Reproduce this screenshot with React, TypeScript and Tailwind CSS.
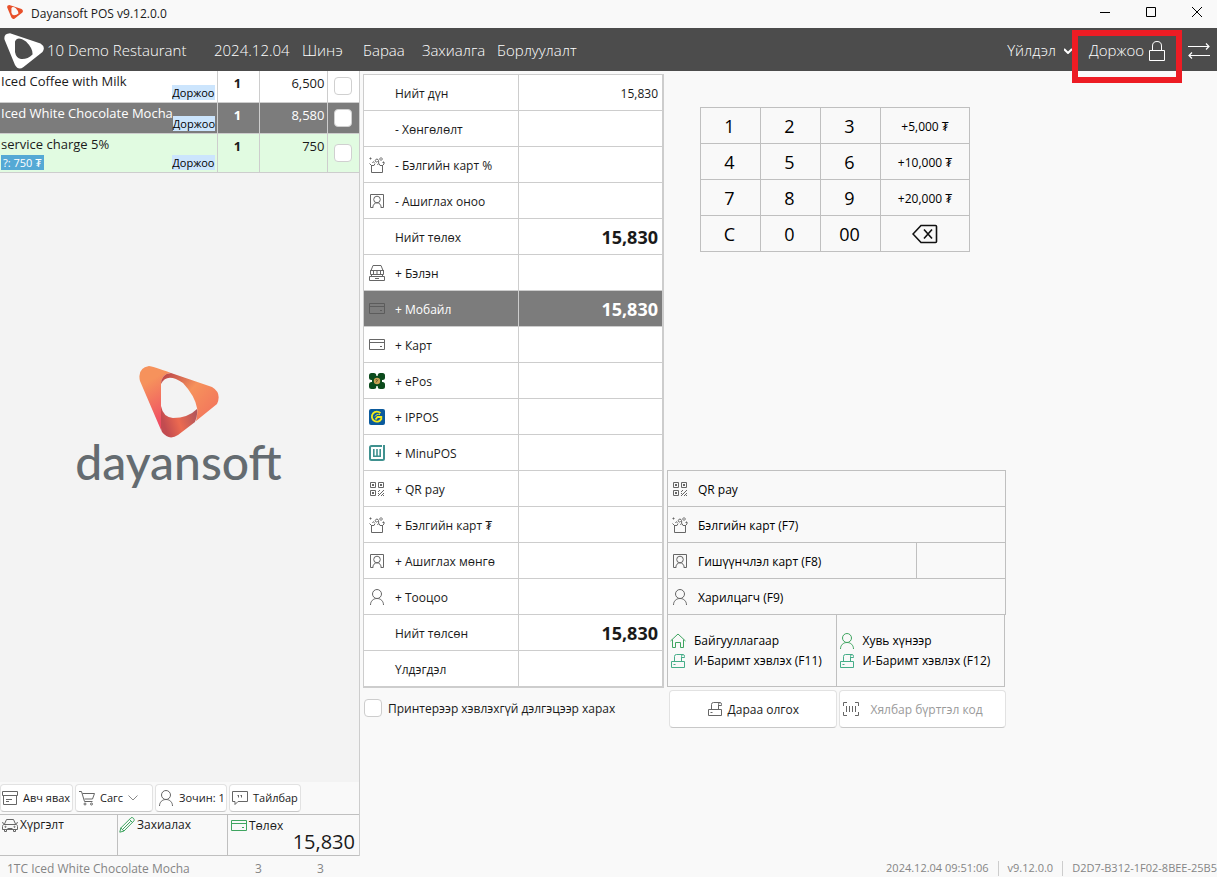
import type { ReactNode } from "react";

type IconProps = { className?: string };

function Icon({ className = "text-[#666]", children }: IconProps & { children: ReactNode }) {
  return (
    <svg viewBox="0 0 16 16" fill="none" stroke="currentColor" className={`size-4 shrink-0 ${className}`} aria-hidden="true">
      {children}
    </svg>
  );
}

const GiftIcon = () => (
  <Icon>
    <path d="M2.5 8v7.500h11V8M2.500 8.500H5l1-2M13.500 8.500H11l-1-2M2.500 8.500L.5 6.500M13.500 8.500l2-2" />
    <path d="M8.500 8c1.500-1.500 1.500-4.500.5-5.500-1.500-1.200-3.500.5-2.500 2 .8 1 2 .5 2-.5M3.500 6c.5-1.500 1.500-1.500 2-.5" />
    <path d="M12 .5l1.500 1.500L12 3.500 10.500 2zM1.500 .5v2M.5 1.500h2M14.500 4.500v2M13.500 5.500h2" />
  </Icon>
);

const MemberIcon = () => (
  <Icon>
    <path d="M4 14.500H1.500v-13h13v13H12" />
    <circle cx="8" cy="6.500" r="3.300" />
    <path d="M3.800 15c0-3.200 1.700-5.200 4.200-5.200s4.200 2 4.200 5.200" />
  </Icon>
);

const PersonIcon = ({ className }: IconProps) => (
  <Icon className={className}>
    <circle cx="8" cy="5" r="4.500" />
    <path d="M1.500 16c0-3.800 2.700-6.500 6.500-6.500s6.500 2.700 6.500 6.500" />
  </Icon>
);

const RegisterIcon = () => (
  <Icon>
    <path d="M2 5.500L4 .5h8l2 5M1 5.500h14M1.500 5.500v4h13v-4M4.500 5.500v4M8 5.500v4M11.500 5.500v4M2.500 9.500v2M13.500 9.500v2" />
    <path d="M.5 11.500h15v4H.5zM6 13.500h4" />
  </Icon>
);

const CardIcon = ({ className }: IconProps) => (
  <Icon className={className}>
    <path d="M.5 2.500h15v10H.5zM.5 5.500h15M11 9.500h2" />
  </Icon>
);

const QrIcon = () => (
  <Icon>
    <path d="M1.500 1.500h5v5h-5zM9.500 1.500h5v5h-5zM1.500 9.500h5v5h-5z" />
    <path d="M3 4h2M11 4h2M3 12h2" strokeWidth="2" />
    <path d="M9 11l2-2M9 15l6-6M12 15l3-3M9 13l1-1M14 15l1-1" />
  </Icon>
);

const EposIcon = () => (
  <Icon>
    <g fill="#0b4a1c" stroke="none">
      <rect x="0" y="0" width="7.300" height="7" rx="2.500" />
      <rect x="8.700" y="0" width="7.300" height="7" rx="2.500" />
      <rect x="0" y="9" width="7.300" height="7" rx="2.500" />
      <rect x="8.700" y="9" width="7.300" height="7" rx="2.500" />
      <rect x="3" y="3" width="10" height="10" />
    </g>
    <circle cx="8" cy="8" r="3.200" fill="#c9a355" stroke="none" />
    <path d="M7 9.500l2-3M6.500 7l1.500-.5" stroke="#6b5a2a" />
  </Icon>
);

const IpposIcon = () => (
  <Icon>
    <rect width="16" height="16" rx="2" fill="#0b5a9c" stroke="none" />
    <path d="M11.500 4.200A5 5 0 1 0 12.300 10V8H8.500L6.500 10.500" stroke="#f2ea1c" strokeWidth="1.800" />
    <path d="M6 7.500C7 5.500 9 5 11 5.500" stroke="#f2ea1c" />
  </Icon>
);

const MinuIcon = () => (
  <Icon>
    <path d="M13 1H2.500Q1 1 1 2.500v11Q1 15 2.500 15h11q1.500 0 1.500-1.500V0" stroke="#3f918f" strokeWidth="2" />
    <path d="M4.800 4v7.200h6.400V4M8 4v7" stroke="#3f918f" strokeWidth="1.600" />
  </Icon>
);

const ReceiptIcon = ({ className }: IconProps) => (
  <Icon className={className}>
    <path d="M1.500 8.500h13v6h-13zM4.500 8.500v-5q0-2 2-2h6.500M11.500 8.500v-5q0-2 1.500-2t1.500 2v1h-3M3.500 11.500h2" />
  </Icon>
);

const HomeIcon = ({ className }: IconProps) => (
  <Icon className={className}>
    <path d="M.5 8L8 1l7.500 7M2.500 6.500v8h3v-5h5v5h3v-8" />
  </Icon>
);

const ScanIcon = () => (
  <Icon>
    <path d="M4 1.500H.5V5M12 1.500h3.500V5M4 14.500H.5V11M12 14.500h3.500V11M3.500 5v6M6.500 5v6M9.500 5v6M12.500 5v6" />
  </Icon>
);

const BoxIcon = () => (
  <Icon>
    <path d="M.5 1.500h15v4H.5zM1.500 5.500v9h13v-9M4 9.500h6M4 11.500h3" />
  </Icon>
);

const CartIcon = () => (
  <Icon>
    <path d="M0 1.500h2.500l3 10h8M3.500 3.500h12l-2 5.500h-8" />
    <circle cx="6" cy="14" r="1" />
    <circle cx="12.500" cy="14" r="1" />
  </Icon>
);

const CommentIcon = () => (
  <Icon>
    <path d="M.5 1.500h15v10H6l-3 3v-3H.5zM6.500 5v2.500M9.500 5v2.500M5.500 5.500h1M8.500 5.500h1" />
  </Icon>
);

const CarIcon = () => (
  <Icon>
    <path d="M2.500 7l2-4.500h7l2 4.500M1.500 7.500h13q1 1 1 2v3H.5v-3q0-1 1-2zM2.500 12.500v2h2v-2M11.500 12.500v2h2v-2M5.500 11.500h5M0 5.500l2 1M16 5.500l-2 1" />
    <circle cx="3.500" cy="9.800" r=".6" />
    <circle cx="12.500" cy="9.800" r=".6" />
  </Icon>
);

const PencilIcon = () => (
  <Icon className="text-[#3fa560]">
    <path d="M.8 15.200l1-4.200L12 .8q1.200-.8 2.400.4t.6 2.600L5 14zM1.800 11L5 14M10.500 2.500l3 3M3.500 12.500l8-8" />
  </Icon>
);

function BrandMark({ className }: IconProps) {
  return (
    <svg viewBox="0 0 80 72" className={className} aria-hidden="true">
      <path
        fillRule="evenodd"
        fill="currentColor"
        d="M12 .5L73 21Q84 28 77 38L39 68Q29 76 22 64L1 13Q-1 1 12 .5zM22 17V38Q24 50 34 52Q47 53 57 43Q58 31 44 17Q27 5 22 17z"
      />
    </svg>
  );
}

function ColorMark({ className }: IconProps) {
  return (
    <svg viewBox="0 0 80 72" className={className} aria-hidden="true">
      <defs>
        <linearGradient id="left" x1="0" y1="0" x2=".3" y2="1">
          <stop offset=".3" stopColor="#f6925c" />
          <stop offset="1" stopColor="#ef4d63" />
        </linearGradient>
        <linearGradient id="right" x1="0" y1="0" x2=".9" y2=".7">
          <stop offset="0" stopColor="#b63f48" />
          <stop offset=".55" stopColor="#f6925c" />
          <stop offset="1" stopColor="#f37a5c" />
        </linearGradient>
        <linearGradient id="bottom" x1="0" y1=".3" x2="1" y2="0">
          <stop offset="0" stopColor="#c24b50" />
          <stop offset=".4" stopColor="#ec6a50" />
          <stop offset="1" stopColor="#a8525c" />
        </linearGradient>
      </defs>
      <path fill="url(#left)" d="M10 0Q13 0 32 7Q22 8 22 18V64L1 15Q-2 2 10 0z" />
      <path fill="url(#right)" d="M32 7L73 21Q83 27 78 38L57 55Q59 46 58 42Q56 30 44 17Q28 6 22 18Q22 8 32 7z" />
      <path fill="url(#bottom)" d="M22 40Q24 51 34 52Q49 52 58 43Q59 49 56 56L39 69Q30 75 23 66Q22 64 22 62z" />
    </svg>
  );
}

const orders = [
  { name: "Iced Coffee with Milk", qty: 1, price: "6,500", row: "h-[31px] bg-white" },
  { name: "Iced White Chocolate Mocha", qty: 1, price: "8,580", row: "h-[31px] bg-[#7c7c7c] text-white" },
  { name: "service charge 5%", qty: 1, price: "750", row: "h-[39px] bg-[#e1fbe1]", tag: "?: 750 ₮" },
];

const payments: { icon?: ReactNode; label: string; amount?: string; bold?: boolean; active?: boolean }[] = [
  { label: "Нийт дүн", amount: "15,830" },
  { label: "- Хөнгөлөлт" },
  { icon: <GiftIcon />, label: "- Бэлгийн карт %" },
  { icon: <MemberIcon />, label: "- Ашиглах оноо" },
  { label: "Нийт төлөх", amount: "15,830", bold: true },
  { icon: <RegisterIcon />, label: "+ Бэлэн" },
  { icon: <CardIcon className="text-[#5c5c5c]" />, label: "+ Мобайл", amount: "15,830", bold: true, active: true },
  { icon: <CardIcon />, label: "+ Карт" },
  { icon: <EposIcon />, label: "+ ePos" },
  { icon: <IpposIcon />, label: "+ IPPOS" },
  { icon: <MinuIcon />, label: "+ MinuPOS" },
  { icon: <QrIcon />, label: "+ QR pay" },
  { icon: <GiftIcon />, label: "+ Бэлгийн карт ₮" },
  { icon: <MemberIcon />, label: "+ Ашиглах мөнгө" },
  { icon: <PersonIcon />, label: "+ Тооцоо" },
  { label: "Нийт төлсөн", amount: "15,830", bold: true },
  { label: "Үлдэгдэл" },
];

const keys = ["1", "2", "3", "+5,000 ₮", "4", "5", "6", "+10,000 ₮", "7", "8", "9", "+20,000 ₮", "C", "0", "00"];

function TitleBar() {
  return (
    <div className="flex h-7 items-center bg-[#f9f9f9] pl-[7px]">
      <BrandMark className="mb-1 h-4 w-4 text-[#e8502a]" />
      <span className="ml-2 text-xs">Dayansoft POS v9.12.0.0</span>
      <div className="ml-auto flex gap-9 pr-[15px] pb-1">
        <button aria-label="Minimize">
          <svg viewBox="0 0 10 10" className="size-[10px]" stroke="#000"><path d="M0 5.500h10" /></svg>
        </button>
        <button aria-label="Maximize">
          <svg viewBox="0 0 10 10" className="size-[10px]" stroke="#000" fill="none"><path d="M.5 .5h9v9h-9z" /></svg>
        </button>
        <button aria-label="Close">
          <svg viewBox="0 0 10 10" className="size-[10px]" stroke="#000"><path d="M0 0l10 10M10 0L0 10" /></svg>
        </button>
      </div>
    </div>
  );
}

function Header() {
  return (
    <header className="flex h-[43px] items-center bg-[#4c4c4c] pt-[2px] pl-1 text-[15px] font-light text-white">
      <BrandMark className="h-9 w-10" />
      <span className="ml-[3px] w-[167px] whitespace-nowrap">10 Demo Restaurant</span>
      <span className="w-[88px] whitespace-nowrap">2024.12.04</span>
      <nav className="flex gap-[19px]">
        <button className="w-[42px] text-left">Шинэ</button>
        <button className="w-10 text-left">Бараа</button>
        <button className="w-14 text-left">Захиалга</button>
        <button>Борлуулалт</button>
      </nav>
      <div className="ml-auto flex h-full items-center">
        <button className="flex items-center gap-2 whitespace-nowrap">
          Үйлдэл
          <svg viewBox="0 0 8 6" className="h-[6px] w-2" fill="none" stroke="currentColor" strokeWidth="2"><path d="M0 1l4 4 4-4" /></svg>
        </button>
        <div className="relative flex h-full w-[110px] items-center justify-center">
          <button className="flex items-center gap-[5px] whitespace-nowrap">
            Доржоо
            <svg viewBox="0 0 16 20" className="h-5 w-4" fill="none" stroke="currentColor"><path d="M.5 9.500h15v10H.5zM3.500 9.500V5q0-4.500 4.500-4.500T12.500 5v4.500" /></svg>
          </button>
          <div className="pointer-events-none absolute inset-x-0 top-0 z-10 h-[53px] border-[6px] border-[#ed1c24]" />
        </div>
        <button aria-label="Switch user" className="pr-[7px] pl-[6px]">
          <svg viewBox="0 0 22 16" className="h-4 w-[22px]" fill="none" stroke="currentColor" strokeWidth="1.200"><path d="M0 3.500h21M18 .5l3 3-3 3M22 12.500H1M4 9.500l-3 3 3 3" /></svg>
        </button>
      </div>
    </header>
  );
}

function OrderPanel() {
  const action = "flex h-7 items-center gap-[5px] whitespace-nowrap rounded border border-[#e2e2e2] border-b-[#c8c8c8] bg-white";
  return (
    <aside className="flex w-[360px] shrink-0 flex-col border-r border-[#cdcdcd]">
      <table className="w-full table-fixed">
        <colgroup>
          <col />
          <col className="w-[42px]" />
          <col className="w-[68px]" />
          <col className="w-8" />
        </colgroup>
        <tbody>
          {orders.map((order) => (
            <tr key={order.name} className={`border-b border-[#cdcdcd] text-[13px] ${order.row}`}>
              <td className="h-[inherit] border-r border-[#cdcdcd] p-0 align-top">
                <div className="flex h-full justify-between pl-px">
                  <div className="flex flex-col items-start justify-between whitespace-nowrap">
                    <span className="leading-5">{order.name}</span>
                    {order.tag && <span className="mb-[2px] bg-[#55a9d5] px-[2px] text-[11px] leading-[15px] text-white">{order.tag}</span>}
                  </div>
                  <span className="mr-[2px] mb-[2px] self-end bg-[#cce5fd] text-[11px] leading-[15px] text-black">Доржоо</span>
                </div>
              </td>
              <td className="border-r border-[#cdcdcd] p-0 pr-px text-center align-top leading-6 font-bold">{order.qty}</td>
              <td className="border-r border-[#cdcdcd] p-0 pr-[2px] text-right align-top leading-6">{order.price}</td>
              <td className="p-0 text-center align-middle">
                <input
                  type="checkbox"
                  aria-label={order.name}
                  className="mx-auto block size-[18px] appearance-none rounded border border-[#d0d0d0] bg-white"
                />
              </td>
            </tr>
          ))}
        </tbody>
      </table>

      <div className="flex flex-1 flex-col items-center justify-center bg-[#f3f3f3] pr-[2px] pb-[102px]">
        <ColorMark className="h-[72px] w-20" />
        <span className="font-['Lato',sans-serif] text-5xl font-medium text-[#646b70]">dayansoft</span>
      </div>

      <div className="flex gap-[2px] py-[2px] text-[11px]">
        <button className={`${action} w-[73px] pl-px`}><BoxIcon />Авч явах</button>
        <button className={`${action} w-[78px] pl-[3px]`}>
          <CartIcon />Сагс
          <svg viewBox="0 0 10 6" className="h-[6px] w-[10px]" fill="none" stroke="#888"><path d="M.5 .5L5 5 9.500 .5" /></svg>
        </button>
        <button className={`${action} w-[72px] pl-[2px]`}><PersonIcon />Зочин: 1</button>
        <button className={`${action} w-[72px] pl-[2px]`}><CommentIcon />Тайлбар</button>
      </div>
      <div className="flex h-[42px] border-y border-[#c0c0c0] text-xs">
        <button className="flex w-[118px] items-start gap-[2px] border-r border-[#c0c0c0] pt-[2px] pl-[2px]"><CarIcon />Хүргэлт</button>
        <button className="flex w-[110px] items-start gap-[2px] border-r border-[#c0c0c0] pt-[2px] pl-px"><PencilIcon />Захиалах</button>
        <button className="flex flex-1 flex-col pt-[3px] pr-1 pl-[3px]">
          <span className="flex items-center gap-[2px]"><CardIcon className="text-[#3fa560]" />Төлөх</span>
          <span className="self-end text-xl leading-4">15,830</span>
        </button>
      </div>
    </aside>
  );
}

function PaymentTable() {
  return (
    <div className="border-r border-b border-[#cdcdcd]">
      <table className="w-full table-fixed border-collapse bg-white text-xs">
        <colgroup>
          <col className="w-[155px]" />
          <col />
        </colgroup>
        <tbody>
          {payments.map((row) => (
            <tr key={row.label} className={`h-9 ${row.active ? "bg-[#7c7c7c] text-white" : ""}`}>
              <td className="border border-[#cdcdcd] p-0">
                <div className="flex items-center gap-[10px] pl-[5px]">
                  <span className="w-4">{row.icon}</span>
                  <span className="pt-[2px] whitespace-nowrap">{row.label}</span>
                </div>
              </td>
              <td className={`border border-[#cdcdcd] p-0 pr-1 text-right ${row.bold ? "text-lg leading-6 font-bold" : "pt-[2px]"}`}>{row.amount}</td>
            </tr>
          ))}
        </tbody>
      </table>
    </div>
  );
}

function Keypad() {
  return (
    <div className="mt-[33px] ml-[33px] grid w-[270px] grid-cols-[60px_60px_60px_1fr] border-t border-l border-[#c0c0c0] text-black">
      {keys.map((key) => (
        <button
          key={key}
          className={`h-9 border-r border-b border-[#c0c0c0] ${key.startsWith("+") ? "pt-[2px] text-xs" : "pr-[2px] text-lg leading-6"}`}
        >
          {key}
        </button>
      ))}
      <button aria-label="Backspace" className="flex h-9 items-center justify-center border-r border-b border-[#c0c0c0]">
        <svg viewBox="0 0 26 20" className="h-5 w-[26px]" fill="none" stroke="#111" strokeWidth="1.600"><path d="M9 1.500h14.500q1 0 1 1v15q0 1-1 1H9L1 10zM12 5.500l8 9M20 5.500l-8 9" /></svg>
      </button>
    </div>
  );
}

function PaymentOptions() {
  const option = "flex h-9 w-full items-center gap-[10px] border-b border-[#c0c0c0] pl-1 text-left whitespace-nowrap";
  const receipt = "flex h-[72px] flex-col justify-center gap-1 border-r border-b border-[#c0c0c0] pt-px pl-[2px] whitespace-nowrap";
  return (
    <div className="mb-px border-t border-l border-[#c0c0c0] text-xs text-black">
      <div className="border-r border-[#c0c0c0]">
        <button className={option}><QrIcon /><span className="pt-[2px]">QR pay</span></button>
        <button className={option}><GiftIcon /><span className="pt-[2px]">Бэлгийн карт (F7)</span></button>
        <div className="flex">
          <button className={option}><MemberIcon /><span className="pt-[2px]">Гишүүнчлэл карт (F8)</span></button>
          <div className="w-[89px] shrink-0 border-b border-l border-[#c0c0c0]" />
        </div>
        <button className={option}><PersonIcon /><span className="pt-[2px]">Харилцагч (F9)</span></button>
      </div>
      <div className="mr-px grid grid-cols-2">
        <button className={receipt}>
          <span className="flex items-center gap-2"><HomeIcon className="text-[#3fa560]" />Байгууллагаар</span>
          <span className="flex items-center gap-2"><ReceiptIcon className="text-[#45ad88]" />И-Баримт хэвлэх (F11)</span>
        </button>
        <button className={receipt}>
          <span className="flex items-center gap-2"><PersonIcon className="text-[#3fa560]" />Хувь хүнээр</span>
          <span className="flex items-center gap-2"><ReceiptIcon className="text-[#45ad88]" />И-Баримт хэвлэх (F12)</span>
        </button>
      </div>
    </div>
  );
}

function StatusBar() {
  return (
    <footer className="flex h-[21px] items-center pt-1 text-xs text-[#858585]">
      <span className="w-[255px] pl-[7px]">1TC Iced White Chocolate Mocha</span>
      <span className="w-[62px]">3</span>
      <span>3</span>
      <div className="ml-auto flex text-[11px] whitespace-nowrap">
        <span className="pr-[9px]">2024.12.04 09:51:06</span>
        <span className="border-l border-[#cdcdcd] px-[9px]">v9.12.0.0</span>
        <span className="border-l border-[#cdcdcd] pl-[9px]">D2D7-B312-1F02-8BEE-25B5</span>
      </div>
    </footer>
  );
}

export default function App() {
  return (
    <div className="flex min-h-screen flex-col bg-[#f9f9f9] font-['Open_Sans','Noto_Sans',sans-serif] text-[#1a1a1a]">
      <TitleBar />
      <Header />
      <div className="flex flex-1">
        <OrderPanel />
        <main className="grid flex-1 grid-cols-[301px_339px] content-start gap-x-[3px] gap-y-[2px] pt-[3px] pl-[3px]">
          <PaymentTable />
          <div className="flex flex-col justify-between">
            <Keypad />
            <PaymentOptions />
          </div>
          <label className="flex items-center gap-[6px] pb-[2px] pl-px text-xs whitespace-nowrap">
            <input type="checkbox" className="size-[18px] appearance-none rounded border border-[#cdcdcd] bg-white" />
            <span className="pt-[2px]">Принтерээр хэвлэхгүй дэлгэцээр харах</span>
          </label>
          <div className="grid grid-cols-2 gap-[2px] pl-[2px] text-xs">
            <button className="flex h-[38px] items-center justify-center gap-[5px] rounded border border-[#e2e2e2] border-b-[#c8c8c8] bg-white">
              <ReceiptIcon /><span className="pt-[2px]">Дараа олгох</span>
            </button>
            <button className="flex h-[38px] items-center gap-3 rounded border border-[#e2e2e2] border-b-[#c8c8c8] bg-white pl-[3px] whitespace-nowrap text-[#9a9a9a]">
              <ScanIcon /><span className="pt-[2px]">Хялбар бүртгэл код</span>
            </button>
          </div>
        </main>
      </div>
      <StatusBar />
    </div>
  );
}
